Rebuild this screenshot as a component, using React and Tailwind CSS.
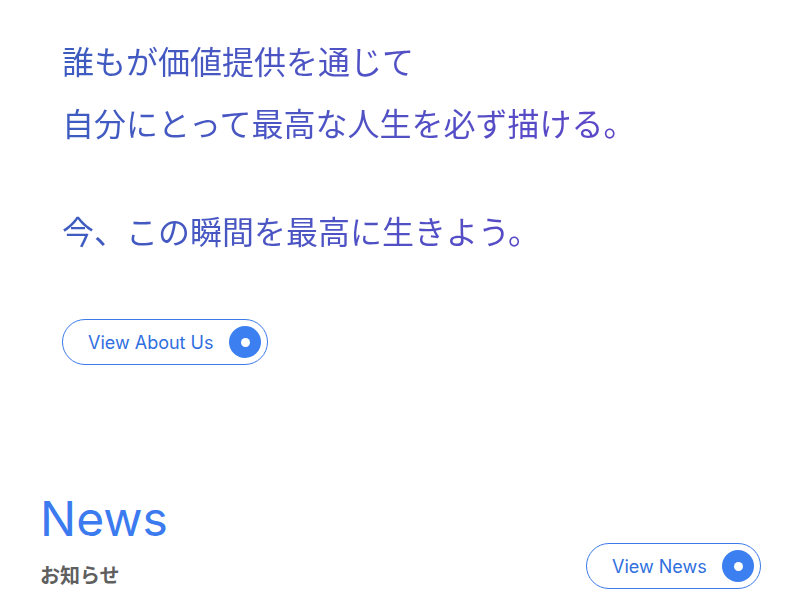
const Arrow = () => (
  <span className="flex h-8 w-8 items-center justify-center rounded-full bg-[#3b7ff0]">
    <span className="h-[9px] w-[9px] rounded-full bg-white" />
  </span>
);

const PillButton = ({ label, width }) => (
  <button
    className={`flex h-[46px] ${width} items-center justify-between rounded-full border border-[#3b7ae8] bg-white pl-[25px] pr-[6px] text-[18px] text-[#2f6fe0]`}
    style={{ fontFamily: "Inter, 'Liberation Sans', sans-serif" }}
  >
    <span>{label}</span>
    <Arrow />
  </button>
);

export default function App() {
  return (
    <div
      className="min-h-[600px] w-[800px] overflow-hidden bg-white"
      style={{ fontFamily: "'Noto Sans CJK JP', 'Noto Sans', sans-serif" }}
    >
      <section className="pl-[62px] pt-[29px]">
        <div className="w-fit bg-gradient-to-r from-[#3d5cc0] to-[#5c46c8] bg-clip-text text-[32px] leading-[62px] text-transparent">
          <p>誰もが価値提供を通じて</p>
          <p>自分にとって最高な人生を必ず描ける。</p>
          <p className="mt-[46px]">今、この瞬間を最高に生きよう。</p>
        </div>
        <div className="mt-[58px]">
          <PillButton label="View About Us" width="w-[206px]" />
        </div>
      </section>

      <section className="mt-[130px] flex items-end justify-between px-[39px] pl-[40px]">
        <div>
          <h2
            className="text-[48px] leading-none text-[#3b7bef]"
            style={{ fontFamily: "Inter, 'Liberation Sans', sans-serif" }}
          >
            News
          </h2>
          <p className="mt-[18px] text-[20px] font-bold leading-[28px] text-[#5f5f5f]">
            お知らせ
          </p>
        </div>
        <PillButton label="View News" width="w-[175px]" />
      </section>
    </div>
  );
}
